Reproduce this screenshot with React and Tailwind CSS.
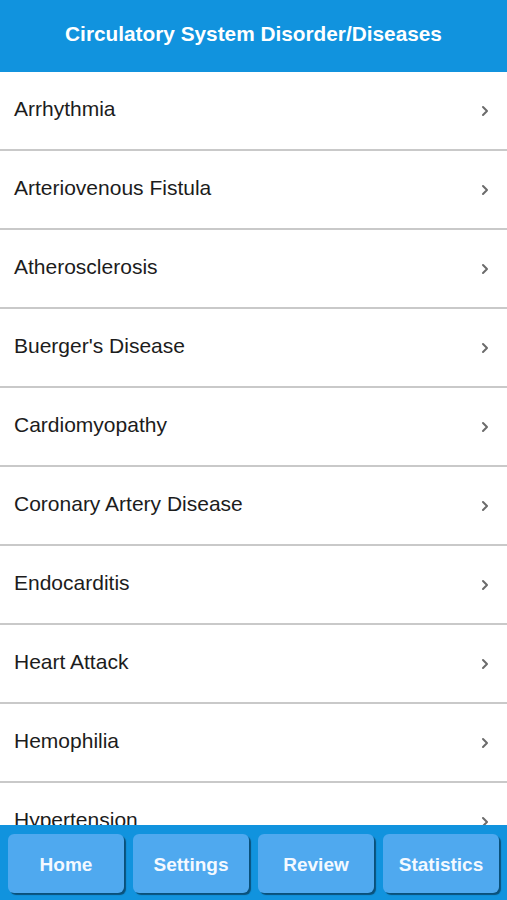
const diseases = [
  "Arrhythmia",
  "Arteriovenous Fistula",
  "Atherosclerosis",
  "Buerger's Disease",
  "Cardiomyopathy",
  "Coronary Artery Disease",
  "Endocarditis",
  "Heart Attack",
  "Hemophilia",
  "Hypertension",
];

function Chevron() {
  return (
    <svg width="8" height="12" viewBox="0 0 8 12" className="shrink-0 mt-1">
      <polyline
        points="2,2 6,6 2,10"
        fill="none"
        stroke="#6b6b6b"
        strokeWidth="2"
        strokeLinecap="round"
        strokeLinejoin="round"
      />
    </svg>
  );
}

export default function App() {
  const tabs = ["Home", "Settings", "Review", "Statistics"];

  return (
    <div
      className="h-[900px] w-full flex flex-col bg-white overflow-hidden"
      style={{ fontFamily: '"Liberation Sans", Arial, sans-serif' }}
    >
      <header className="h-[72px] shrink-0 bg-[#1193de] flex items-center justify-center pb-[5px]">
        <h1 className="text-white text-[20.8px] font-bold">
          Circulatory System Disorder/Diseases
        </h1>
      </header>

      <ul className="flex-1 overflow-hidden">
        {diseases.map((d) => (
          <li
            key={d}
            className="h-[79px] flex items-center justify-between pl-[14px] pr-[18px] pb-1 border-b-2 border-[#c9c9c9]"
          >
            <span className="text-[21px] text-[#1c1c1c]">{d}</span>
            <Chevron />
          </li>
        ))}
      </ul>

      {/* bottom tab bar sits over the end of the list */}
      <nav className="h-[75px] shrink-0 bg-[#1193de] grid grid-cols-4 gap-[9px] pl-[8px] pr-[8px] pt-[9px] pb-[7px]">
        {tabs.map((t) => (
          <button
            key={t}
            className="rounded-md bg-[#4fa9ef] text-[#f4f9ff] text-[19px] font-bold pt-1 shadow-[2px_2px_1px_rgba(0,0,0,0.45)]"
          >
            {t}
          </button>
        ))}
      </nav>
    </div>
  );
}
